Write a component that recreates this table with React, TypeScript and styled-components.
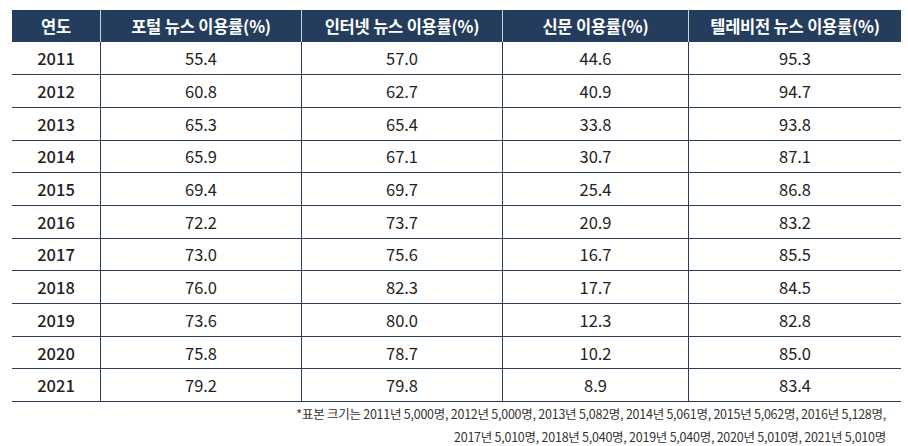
import styled, { createGlobalStyle } from "styled-components";

const GlobalStyle = createGlobalStyle`
  body {
    margin: 0;
    background: #ffffff;
    font-family: "Noto Sans CJK KR", "Noto Sans", sans-serif;
  }
`;

const Page = styled.div`
  padding: 10px 0 0 12px;
  width: 885px;
`;

const Table = styled.table`
  width: 885px;
  border-collapse: collapse;
  table-layout: fixed;
`;

const HeadCell = styled.th<{ $w: number }>`
  width: ${(p) => p.$w}px;
  height: 32px;
  padding: 0;
  background: #243d5d;
  color: #ffffff;
  font-size: 16.5px;
  font-weight: 700;
  letter-spacing: -0.2px;
  text-align: center;
  border-left: 1px solid #c9d0da;
  &:first-child {
    border-left: none;
  }
`;

const Row = styled.tr`
  height: 32.7px;
  border-bottom: 1px solid #2b3d57;
`;

const Cell = styled.td<{ $year?: boolean }>`
  padding: 0;
  text-align: center;
  font-size: ${(p) => (p.$year ? 16.5 : 16.5)}px;
  font-weight: ${(p) => (p.$year ? 500 : 400)};
  color: #222222;
  border-left: 1px solid #2b3d57;
  &:first-child {
    border-left: none;
  }
`;

const Note = styled.p`
  margin: 0;
  width: 874px;
  text-align: right;
  font-size: 12.5px;
  line-height: 23px;
  letter-spacing: -0.25px;
  color: #333333;
`;

const columns = [
  { title: "연도", w: 88 },
  { title: "포털 뉴스 이용률(%)", w: 200 },
  { title: "인터넷 뉴스 이용률(%)", w: 200 },
  { title: "신문 이용률(%)", w: 185 },
  { title: "텔레비전 뉴스 이용률(%)", w: 212 },
];

const rows = [
  ["2011", "55.4", "57.0", "44.6", "95.3"],
  ["2012", "60.8", "62.7", "40.9", "94.7"],
  ["2013", "65.3", "65.4", "33.8", "93.8"],
  ["2014", "65.9", "67.1", "30.7", "87.1"],
  ["2015", "69.4", "69.7", "25.4", "86.8"],
  ["2016", "72.2", "73.7", "20.9", "83.2"],
  ["2017", "73.0", "75.6", "16.7", "85.5"],
  ["2018", "76.0", "82.3", "17.7", "84.5"],
  ["2019", "73.6", "80.0", "12.3", "82.8"],
  ["2020", "75.8", "78.7", "10.2", "85.0"],
  ["2021", "79.2", "79.8", "8.9", "83.4"],
];

export default function App() {
  return (
    <>
      <GlobalStyle />
      <Page>
        <Table>
          <thead>
            <tr>
              {columns.map((c) => (
                <HeadCell key={c.title} $w={c.w}>
                  {c.title}
                </HeadCell>
              ))}
            </tr>
          </thead>
          <tbody>
            {rows.map((r) => (
              <Row key={r[0]}>
                {r.map((v, i) => (
                  <Cell key={i} $year={i === 0}>
                    {v}
                  </Cell>
                ))}
              </Row>
            ))}
          </tbody>
        </Table>
        <Note>
          *표본 크기는 2011년 5,000명, 2012년 5,000명, 2013년 5,082명, 2014년 5,061명, 2015년 5,062명, 2016년 5,128명,
          <br />
          2017년 5,010명, 2018년 5,040명, 2019년 5,040명, 2020년 5,010명, 2021년 5,010명
        </Note>
      </Page>
    </>
  );
}
